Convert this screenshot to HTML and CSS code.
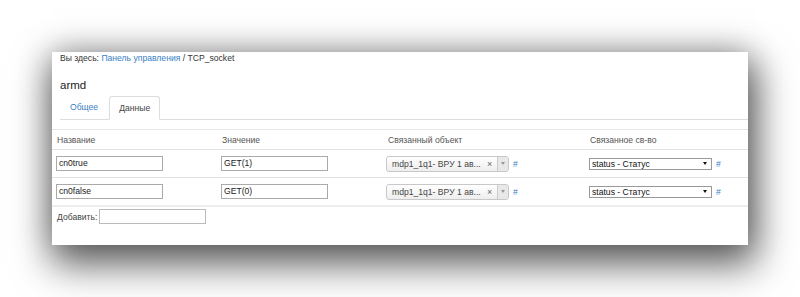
FILE: index.html
```html
<!DOCTYPE html>
<html>
<head>
<meta charset="utf-8">
<link rel="stylesheet" href="styles.css">
</head>
<body>
<div class="page">
  <div class="panel">
    <div class="crumbs">Вы здесь: <a class="link">Панель управления</a> / TCP_socket</div>
    <div class="title">armd</div>
    <div class="tabs">
      <div class="tab">Общее</div>
      <div class="tab active">Данные</div>
    </div>
    <div class="table">
      <div class="row head">
        <div class="c1">Название</div>
        <div class="c2">Значение</div>
        <div class="c3">Связанный объект</div>
        <div class="c4">Связанное св-во</div>
      </div>
      <div class="row">
        <div class="c1"><span class="inp">cn0true</span></div>
        <div class="c2"><span class="inp">GET(1)</span></div>
        <div class="c3"><span class="s2"><span class="s2t">mdp1_1q1- ВРУ 1 ав...</span><span class="s2x">×</span><span class="s2a"><span class="tri"></span></span></span><span class="hash">#</span></div>
        <div class="c4"><span class="sel"><span class="selt">status - Статус</span><span class="tri dark"></span></span><span class="hash">#</span></div>
      </div>
      <div class="row">
        <div class="c1"><span class="inp">cn0false</span></div>
        <div class="c2"><span class="inp">GET(0)</span></div>
        <div class="c3"><span class="s2"><span class="s2t">mdp1_1q1- ВРУ 1 ав...</span><span class="s2x">×</span><span class="s2a"><span class="tri"></span></span></span><span class="hash">#</span></div>
        <div class="c4"><span class="sel"><span class="selt">status - Статус</span><span class="tri dark"></span></span><span class="hash">#</span></div>
      </div>
    </div>
    <div class="add">Добавить: <span class="inp add-inp"></span></div>
  </div>
</div>
</body>
</html>
```
FILE: styles.css
```css
html, body { margin: 0; background: #fff; }
body { font-family: "Liberation Sans", Arial, sans-serif; color: #333; }
.page { padding: 52px 0 0 52px; height: 245px; }
.panel {
  width: 696px; height: 193px; background: #fff;
  box-shadow: 4px 16px 36px 4px rgba(0,0,0,0.6), 0 -2px 30px rgba(0,0,0,0.25);
  box-sizing: border-box;
}
.crumbs { font-size: 8.6px; padding: 1px 0 0 8px; line-height: 11px; color: #333; }
.link { color: #3a7fc4; }
.title { font-size: 11.5px; padding: 14px 0 0 8px; line-height: 14px; color: #222; }
.tabs { display: flex; margin: 4px 0 0 8px; border-bottom: 1px solid #ddd; height: 23px; }
.tab { font-size: 8.6px; padding: 0 10px; line-height: 23px; color: #3a7fc4; }
.tab.active { color: #444; border: 1px solid #ddd; border-bottom: 1px solid #fff; border-radius: 3px 3px 0 0; height: 24px; margin-bottom: -1px; padding: 0 9px; line-height: 23px; box-sizing: border-box; margin-left: 1px; }
.table { margin-top: 9px; border-top: 1px solid #e6e6e6; }
.row { display: flex; align-items: center; height: 27px; border-bottom: 1px solid #e3e3e3; font-size: 8.6px; }
.row.head { height: 19px; color: #555; }
.row.head > div { padding-left: 5px; }
.c1, .c2, .c3, .c4 { box-sizing: border-box; padding-left: 4px; display: flex; align-items: center; }
.c1 { width: 165px; }
.c2 { width: 166px; }
.c3 { width: 202px; }
.c4 { flex: 1; }
.row .c3 { padding-left: 3px; }
.inp { display: inline-block; width: 107px; height: 15px; border: 1px solid #aaa; box-sizing: border-box; font-size: 8.6px; line-height: 13px; padding-left: 2px; color: #222; background: #fff; }
.s2 { display: inline-flex; align-items: center; width: 123px; height: 16px; border: 1px solid #c8c8c8; border-radius: 3px; box-sizing: border-box; background: linear-gradient(#fff, #eee); font-size: 8.6px; color: #444; }
.s2t { padding-left: 5px; flex: 1; white-space: nowrap; overflow: hidden; }
.s2x { font-size: 9px; color: #666; width: 10px; }
.s2a { width: 10px; height: 14px; border-left: 1px solid #ccc; background: #e8e8e8; display: flex; align-items: center; justify-content: center; border-radius: 0 2px 2px 0; }
.tri { width: 0; height: 0; border-left: 2px solid transparent; border-right: 2px solid transparent; border-top: 3px solid #999; }
.tri.dark { border-top-color: #111; border-left-width: 2.5px; border-right-width: 2.5px; margin-right: 4px; }
.hash { color: #3a7fc4; font-size: 8.6px; margin-left: 4px; }
.sel { display: inline-flex; align-items: center; width: 123px; height: 12px; border: 1px solid #999; box-sizing: border-box; font-size: 8.6px; color: #111; background: #fff; }
.selt { flex: 1; padding-left: 2px; line-height: 10px; }
.row:last-child { border-bottom: 2px solid #eee; }
.add { display: flex; align-items: center; font-size: 8.6px; color: #444; padding: 2px 0 0 5px; }
.add-inp { margin-left: 2px; width: 107px; height: 15px; border-color: #bbb; }
```
